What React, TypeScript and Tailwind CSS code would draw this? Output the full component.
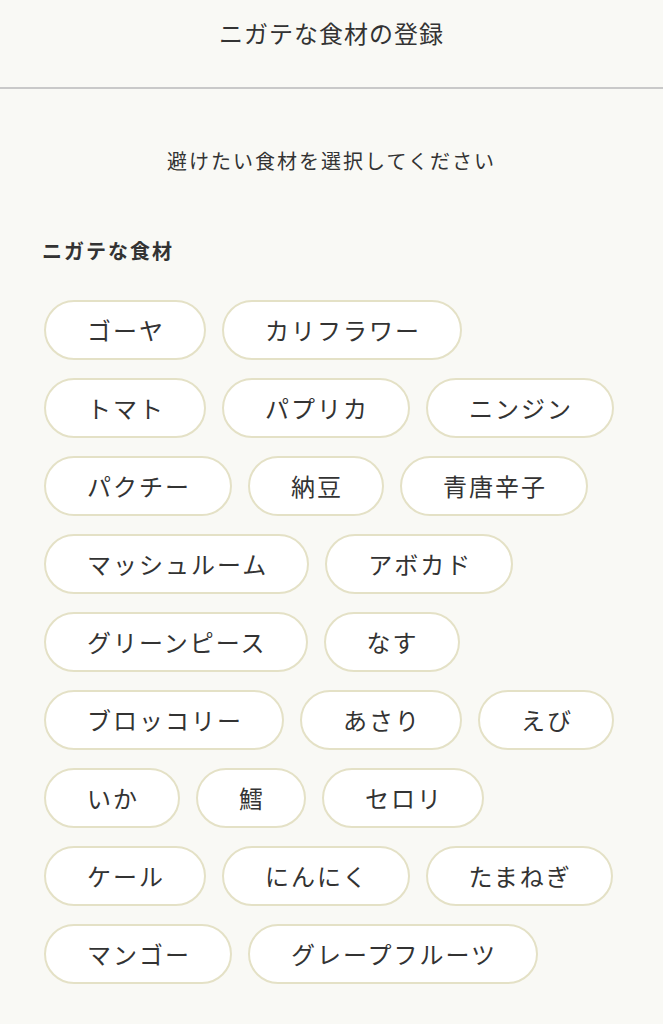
import React from 'react'

const rows: string[] = [
  'ゴーヤ',
  'カリフラワー',
  'トマト',
  'パプリカ',
  'ニンジン',
  'パクチー',
  '納豆',
  '青唐辛子',
  'マッシュルーム',
  'アボカド',
  'グリーンピース',
  'なす',
  'ブロッコリー',
  'あさり',
  'えび',
  'いか',
  '鱈',
  'セロリ',
  'ケール',
  'にんにく',
  'たまねぎ',
  'マンゴー',
  'グレープフルーツ',
]

function Chip({ label }: { label: string }) {
  return (
    <button
      type="button"
      className="flex h-[60px] items-center justify-center rounded-full border-2 border-[#e4e1c6] bg-white pl-[41px] pr-[39px] text-[24px] leading-none tracking-[2px] text-[#333333]"
    >
      {label}
    </button>
  )
}

export default function App() {
  return (
    <div
      className="min-h-[1024px] w-full bg-[#f9f9f5] text-[#333333]"
      style={{ fontFamily: '"Noto Sans CJK JP", "Noto Sans", sans-serif' }}
    >
      {/* ヘッダー */}
      <header className="box-border h-[89px] border-b-2 border-[#c9c9c9] pt-[17px] text-center">
        <h1 className="text-[24px] leading-[32px] tracking-[1px] font-normal">ニガテな食材の登録</h1>
      </header>

      <p className="mt-[57px] text-center text-[20px] leading-[30px] tracking-[2px]">
        避けたい食材を選択してください
      </p>

      <h2 className="mt-[60px] px-[42px] text-[20px] font-bold leading-[30px] tracking-[2px]">
        ニガテな食材
      </h2>

      {/* 食材リスト */}
      <div className="mt-[34px] flex flex-wrap gap-x-[16px] gap-y-[18px] px-[44px] pb-10">
        {rows.map((item) => (
          <Chip key={item} label={item} />
        ))}
      </div>
    </div>
  )
}
